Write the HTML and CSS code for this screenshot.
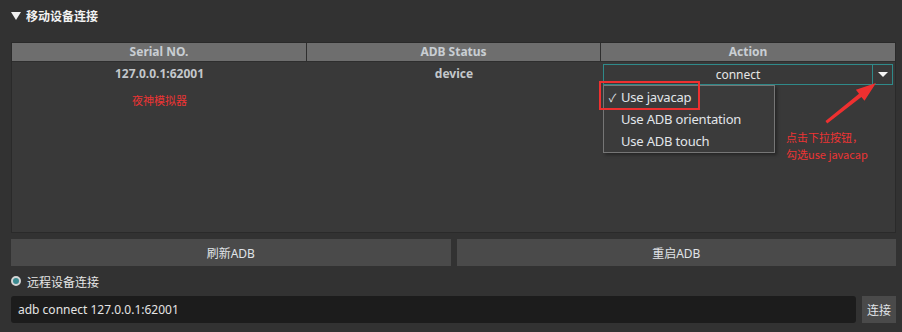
FILE: index.html
```html
<!DOCTYPE html>
<html>
<head>
<meta charset="utf-8">
<link rel="stylesheet" href="styles.css">
</head>
<body>
<div class="page">
  <div class="title">
    <span class="tri"></span>
    <span class="title-text">移动设备连接</span>
  </div>

  <div class="table">
    <div class="thead">
      <div class="th">Serial NO.</div>
      <div class="th">ADB Status</div>
      <div class="th">Action</div>
    </div>
    <div class="tbody">
      <div class="td serial">
        <div class="cell-text">127.0.0.1:62001</div>
        <div class="note-red">夜神模拟器</div>
      </div>
      <div class="td">
        <div class="cell-text">device</div>
      </div>
      <div class="td action">
        <div class="combo">
          <span class="combo-text">connect</span>
          <span class="combo-btn"><span class="combo-tri"></span></span>
        </div>
      </div>
    </div>

    <div class="menu">
      <div class="menu-item"><span class="check">✓</span>Use javacap</div>
      <div class="menu-item"><span class="check"></span>Use ADB orientation</div>
      <div class="menu-item"><span class="check"></span>Use ADB touch</div>
    </div>
    <div class="red-box"></div>
    <svg class="arrow" width="56" height="46" viewBox="0 0 56 46">
      <polygon points="0.5,40 34,12.7 30.9,8.8 51,2 39.5,19.8 36.4,15.9 2.2,42.5" fill="#ee3030"/>
    </svg>
    <div class="tip">点击下拉按钮，<br>勾选use javacap</div>
  </div>

  <div class="btn-row">
    <div class="btn">刷新ADB</div>
    <div class="btn">重启ADB</div>
  </div>

  <div class="radio-row">
    <span class="radio"></span>
    <span class="radio-label">远程设备连接</span>
  </div>

  <div class="input-row">
    <div class="input">adb connect 127.0.0.1:62001</div>
    <div class="btn small">连接</div>
  </div>
</div>
</body>
</html>
```

FILE: styles.css
```css
html, body {
  margin: 0;
  padding: 0;
  background: #323232;
}
body {
  width: 902px;
  height: 332px;
  overflow: hidden;
  font-family: "Noto Sans", "Noto Sans CJK SC", sans-serif;
  color: #d6d6d6;
}
.page {
  padding: 0 6px 0 11px;
}
.title {
  height: 30px;
  display: flex;
  align-items: center;
  gap: 5px;
}
.tri {
  width: 0;
  height: 0;
  border-left: 5px solid transparent;
  border-right: 5px solid transparent;
  border-top: 8px solid #f0f0f0;
  margin-top: 1px;
}
.title-text {
  font-family: "Noto Sans CJK SC", sans-serif;
  font-size: 12px;
  font-weight: bold;
  color: #f2f2f2;
}
.table {
  position: relative;
  margin-top: 12px;
  height: 189px;
  border: 1px solid #2a2a2a;
  background: #393939;
}
.thead {
  display: grid;
  grid-template-columns: 294px 293px 294px;
  gap: 1px;
  background: #2e2e2e;
  border-bottom: 1px solid #2e2e2e;
}
.th {
  height: 18px;
  background: #6e6e6e;
  text-align: center;
  font-size: 12px;
  font-weight: bold;
  line-height: 18px;
  color: #c9ced3;
}
.tbody {
  display: grid;
  grid-template-columns: 295px 294px 294px;
}
.td {
  display: flex;
  flex-direction: column;
  align-items: center;
}
.cell-text {
  height: 24px;
  line-height: 24px;
  font-size: 12px;
  font-weight: bold;
  color: #c3c7cb;
}
.note-red {
  margin-top: 7px;
  font-family: "Noto Sans CJK SC", sans-serif;
  font-size: 11px;
  line-height: 14px;
  color: #ec3434;
}
.action {
  padding: 2px 2px 0 2px;
  align-items: stretch;
}
.combo {
  height: 19px;
  border: 1px solid #2f8a8a;
  display: flex;
  background: #393939;
}
.combo-text {
  flex: 1;
  text-align: center;
  font-size: 12px;
  line-height: 19px;
  color: #e6e6e6;
}
.combo-btn {
  width: 19px;
  border-left: 1px solid #2f8a8a;
  display: flex;
  align-items: center;
  justify-content: center;
}
.combo-tri {
  width: 0;
  height: 0;
  border-left: 5px solid transparent;
  border-right: 5px solid transparent;
  border-top: 5px solid #f4f4f4;
}
.menu {
  position: absolute;
  left: 591px;
  top: 42px;
  width: 170px;
  border: 1px solid #767676;
  background: #3b3b3b;
  box-shadow: 2px 2px 3px rgba(0,0,0,0.35);
}
.menu-item {
  height: 22px;
  display: flex;
  align-items: center;
  font-size: 13px;
  letter-spacing: -0.2px;
  color: #e2e6ea;
}
.check {
  width: 17px;
  text-align: center;
  font-size: 11px;
  padding-left: 0;
}
.red-box {
  position: absolute;
  left: 587px;
  top: 38px;
  width: 97px;
  height: 25px;
  border: 2px solid #ee3030;
}
.arrow {
  position: absolute;
  left: 813px;
  top: 38px;
}
.tip {
  position: absolute;
  left: 774px;
  top: 86px;
  font-family: "Noto Sans CJK SC", sans-serif;
  font-size: 11px;
  line-height: 17px;
  color: #ec3434;
}
.btn-row {
  display: flex;
  gap: 6px;
  margin-top: 6px;
}
.btn {
  flex: 1;
  height: 27px;
  background: #4a4a4a;
  display: flex;
  align-items: center;
  justify-content: center;
  font-family: "Noto Sans", "Noto Sans CJK SC", sans-serif;
  font-size: 12px;
  color: #e0e4e8;
}
.btn.small {
  flex: 0 0 34px;
}
.radio-row {
  height: 30px;
  display: flex;
  align-items: center;
  gap: 6px;
}
.radio {
  width: 6px;
  height: 6px;
  border-radius: 50%;
  background: #3b8a90;
  border: 2px solid #d4d4d4;
}
.radio-label {
  font-family: "Noto Sans CJK SC", sans-serif;
  font-size: 12px;
  color: #e6e6e6;
}
.input-row {
  display: flex;
  gap: 6px;
}
.input {
  flex: 1;
  height: 27px;
  background: #1c1c1c;
  border-radius: 3px;
  display: flex;
  align-items: center;
  padding-left: 7px;
  font-size: 12px;
  color: #e4e4e4;
}
```
